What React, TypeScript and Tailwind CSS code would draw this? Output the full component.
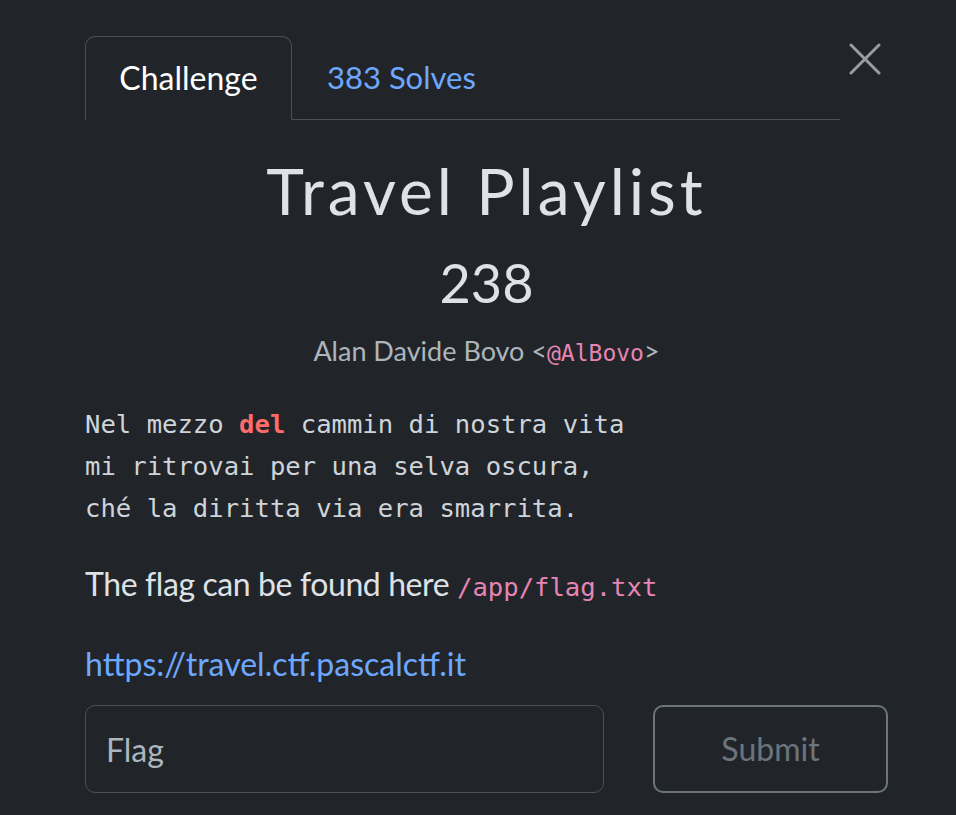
import React from "react";

const lato = { fontFamily: "Lato, 'Open Sans', sans-serif" };

export default function App() {
  return (
    <div className="min-h-[815px] w-full bg-[#212529] text-[#dee2e6] font-['Lato',sans-serif]">
      <div className="pl-[85px] pr-[68px] pt-[36px]">
        {/* tabs + close */}
        <div className="flex items-start">
          <div className="flex flex-none w-[755px] items-end border-b border-[#495057]">
            <div className="-mb-px flex h-[84px] w-[207px] items-center justify-center rounded-t-[10px] border border-b-[#212529] border-[#495057] bg-[#212529] text-[32px] text-white">
              Challenge
            </div>
            <div className="flex h-[83px] items-center pl-[35px] text-[31px] text-[#6ea8fe]">
              383 Solves
            </div>
          </div>
          <button className="ml-[3px] mt-[1px] flex h-[44px] w-[44px] items-center justify-center text-[#9a9da0]">
            <svg width="32" height="32" viewBox="0 0 32 32" fill="none" stroke="currentColor" strokeWidth="3" strokeLinecap="round">
              <path d="M2 2 L30 30 M30 2 L2 30" />
            </svg>
          </button>
        </div>

        <div className="text-center">
          <h1 className="mt-[33px] text-[64px] leading-[76px] tracking-[4px] text-[#dee2e6]">Travel Playlist</h1>
          <div className="mt-[24px] text-[54px] leading-[60px] text-[#dee2e6]">238</div>
          <div className="mt-[20px] text-[27px] leading-[36px] text-[#adb5bd]">
            Alan Davide Bovo &lt;<code className="font-['DejaVu_Sans_Mono',monospace] text-[23px] text-[#e685b5]">@AlBovo</code>&gt;
          </div>
        </div>

        <pre className="mt-[32px] font-['DejaVu_Sans_Mono',monospace] text-[25.6px] leading-[42px] text-[#ced4da]">
          Nel mezzo <span className="font-bold text-[#ff6b6b]">del</span> cammin di nostra vita{"\n"}
          mi ritrovai per una selva oscura,{"\n"}
          ché la diritta via era smarrita.
        </pre>

        <p className="mt-[35px] text-[32px] leading-[40px] tracking-[-0.4px] text-[#dee2e6]">
          The flag can be found here <code className="font-['DejaVu_Sans_Mono',monospace] text-[25.6px] tracking-normal text-[#e685b5]">/app/flag.txt</code>
        </p>

        <p className="mt-[37px] text-[32px] leading-[40px]">
          <a className="text-[#6ea8fe]">https://travel.ctf.pascalctf.it</a>
        </p>

        <div className="mt-[21px] flex items-center">
          <input
            placeholder="Flag"
            style={lato}
            className="h-[88px] w-[519px] rounded-[10px] border border-[#495057] bg-[#212529] px-[20px] text-[32px] text-[#dee2e6] outline-none placeholder:text-[#adb5bd]"
          />
          <button
            style={lato}
            className="ml-[49px] h-[88px] w-[235px] rounded-[10px] border-2 border-[#6c757d] text-[32px] text-[#6c757d]"
          >
            Submit
          </button>
        </div>
      </div>
    </div>
  );
}
